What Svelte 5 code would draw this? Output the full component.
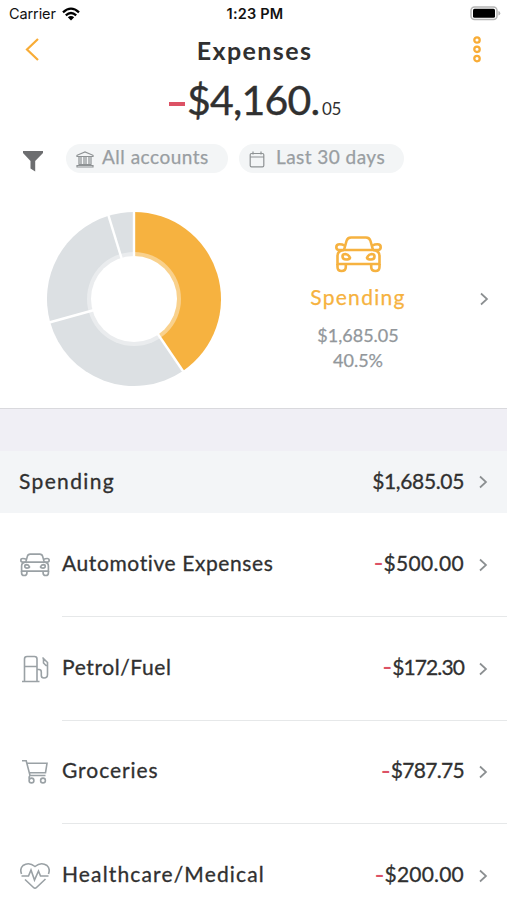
<script lang="ts">
  type IconName = "car" | "fuel" | "cart" | "heart";

  type Expense = {
    icon: IconName;
    name: string;
    amount: string;
    key: string;
  };

  const expenses: Expense[] = [
    { key: "auto", icon: "car", name: "Automotive Expenses", amount: "$500.00" },
    { key: "fuel", icon: "fuel", name: "Petrol/Fuel", amount: "$172.30" },
    { key: "groceries", icon: "cart", name: "Groceries", amount: "$787.75" },
    { key: "health", icon: "heart", name: "Healthcare/Medical", amount: "$200.00" },
  ];

  // angles in degrees, clockwise from the top
  const slices = [
    { from: 0, to: 145.8, color: "#f6b240" },
    { from: 145.8, to: 254.5, color: "#dce0e3" },
    { from: 254.5, to: 343, color: "#dce0e3" },
    { from: 343, to: 360, color: "#dce0e3" },
  ];

  function point(angle: number, radius: number): string {
    const rad = (angle * Math.PI) / 180;
    return `${88 + radius * Math.sin(rad)} ${88 - radius * Math.cos(rad)}`;
  }

  function slicePath(from: number, to: number): string {
    const large = to - from > 180 ? 1 : 0;
    return `M88 88L${point(from, 87)}A87 87 0 ${large} 1 ${point(to, 87)}Z`;
  }
</script>

{#snippet chevron()}
  <svg class="chevron" width="9" height="14" viewBox="0 0 9 14">
    <path d="M1 1.500L7 7L1 12.500" />
  </svg>
{/snippet}

{#snippet car()}
  <path d="M9 14L11.500 5Q12.500 1.500 16 1.500H31Q34.500 1.500 35.500 5L38 14" />
  <path d="M9 14H38Q44.500 14.500 44.500 20V28H2.500V20Q2.500 14.500 9 14Z" />
  <path d="M9.500 9.500Q7.500 8.300 4.500 8.300Q1.300 8.300 1.300 11.200Q1.300 14 4.500 14H9M37.500 9.500Q39.500 8.300 42.500 8.300Q45.700 8.300 45.700 11.200Q45.700 14 42.500 14H38" />
  <path d="M2.500 28V31Q2.500 35 6.500 35Q10.800 35 10.800 31V28M36.200 28V31Q36.200 35 40.500 35Q44.500 35 44.500 31V28" />
  <path d="M7.500 20.500Q7.500 18 10.500 18Q13.500 18.200 15 21.800Q14.500 23.500 11 23.500Q7.500 23.500 7.500 20.500ZM39.500 20.500Q39.500 18 36.500 18Q33.500 18.200 32 21.800Q32.500 23.500 36 23.500Q39.500 23.500 39.500 20.500Z" />
{/snippet}

<main class="screen">
  <div class="status">
    <div class="status__carrier">
      <span>Carrier</span>
      <svg width="18" height="14" viewBox="0 0 18 14">
        <path d="M1 5.300Q9 -2 17 5.300" />
        <path d="M3.800 8.300Q9 3.600 14.200 8.300" />
        <path class="status__dot" d="M5.800 10.300Q9 7.700 12.200 10.300L9 13.600Z" />
      </svg>
    </div>
    <span class="status__time">1:23 PM</span>
    <svg class="status__battery" width="31" height="15" viewBox="0 0 31 15">
      <rect x="1" y="1" width="26" height="12.500" rx="3.500" fill="#fff" stroke="#b5b5b5" stroke-width="1.500" />
      <rect x="3" y="2.800" width="22" height="9" rx="1.500" />
      <path d="M28.400 5Q30.300 5.500 30.300 7.200Q30.300 9 28.400 9.500Z" fill="#b5b5b5" />
    </svg>
  </div>

  <header class="header">
    <button type="button" class="header__button" aria-label="Back">
      <svg width="16" height="26" viewBox="0 0 16 26">
        <path d="M14 2L3 12.500L14 23" fill="none" stroke="#f8ac36" stroke-width="2.200" />
      </svg>
    </button>
    <h1>Expenses</h1>
    <button type="button" class="header__button" aria-label="More">
      <svg width="10" height="28" viewBox="0 0 10 28" fill="none" stroke="#f8ac36" stroke-width="2.300">
        <circle cx="5" cy="4" r="2.700" />
        <circle cx="5" cy="13.300" r="2.700" />
        <circle cx="5" cy="22.600" r="2.700" />
      </svg>
    </button>
  </header>

  <div class="total">
    <span class="total__minus"></span>
    <span class="total__main">$4,160.</span>
    <span class="total__cents">05</span>
  </div>

  <div class="filters">
    <svg class="filters__funnel" width="20" height="21" viewBox="0 0 20 21">
      <path d="M0 0H20V2L12.200 10V20.500L7.500 17.500V10L0 2Z" fill="#6d6e70" />
    </svg>
    <div class="chip chip--accounts">
      <svg width="18" height="17" viewBox="0 0 18 17">
        <path d="M1 5.500V4.300L9 1L17 4.300V5.500ZM2.500 13.500H15.500M1 16H17V14.500H1ZM3 6V13.500M5 6V13.500M8 6V13.500M10 6V13.500M13 6V13.500M15 6V13.500" />
      </svg>
      <span>All accounts</span>
    </div>
    <div class="chip chip--period">
      <svg width="16" height="17" viewBox="0 0 16 17">
        <path d="M2.500 2.500H13.500Q14.800 2.500 14.800 3.800V14.500Q14.800 15.800 13.500 15.800H2.500Q1.200 15.800 1.200 14.500V3.800Q1.200 2.500 2.500 2.500ZM1 6H15M4 0.500V3.500M12 0.500V3.500" />
      </svg>
      <span>Last 30 days</span>
    </div>
  </div>

  <section class="chart">
    <svg class="chart__donut" width="176" height="176" viewBox="0 0 176 176">
      {#each slices as slice}
        <path d={slicePath(slice.from, slice.to)} fill={slice.color} />
      {/each}
      <circle cx="88" cy="88" r="47" fill="#fff" fill-opacity="0.4" />
      {#each slices as slice}
        <path d={`M88 88L${point(slice.from, 88)}`} stroke="#fff" stroke-width="2.400" />
      {/each}
      <circle cx="88" cy="88" r="43" fill="#fff" />
    </svg>
    <div class="chart__summary">
      <svg class="chart__icon" width="47" height="37" viewBox="0 0 47 37">
        {@render car()}
      </svg>
      <span class="chart__name">Spending</span>
      <span class="chart__value">$1,685.05</span>
      <span class="chart__value chart__value--percent">40.5%</span>
    </div>
    {@render chevron()}
  </section>

  <div class="spacer"></div>

  <section>
    <div class="group">
      <span class="group__name">Spending</span>
      <span class="group__amount">$1,685.05</span>
      {@render chevron()}
    </div>

    {#each expenses as expense (expense.key)}
      <div class="row row--{expense.key}">
        <div class="row__icon">
          {#if expense.icon === "car"}
            <svg class="row__car" width="30" height="24" viewBox="0 0 47 37">
              {@render car()}
            </svg>
          {:else if expense.icon === "fuel"}
            <svg width="30" height="28" viewBox="0 0 30 28">
              <path d="M4.500 26V4Q4.500 1.500 7 1.500H14.500Q17 1.500 17 4V26M4.500 11.500H17M2 26.500H19.500M17 14.500H19Q21.300 14.500 21.300 17V20.500Q21.300 23 24 23Q27.500 23 27.500 19.500V7.500L22.500 2.500M23.500 3.800V8L26 10.500H27.500" />
            </svg>
          {:else if expense.icon === "cart"}
            <svg width="30" height="28" viewBox="0 0 30 28">
              <path d="M2 2.800H6.200L10 17.500H25.500M7 5.300H27L25.500 14.800H9.200M10 17.500Q8.500 19 9.500 21" />
              <circle cx="11.500" cy="22.500" r="2.400" />
              <circle cx="23" cy="22.500" r="2.400" />
            </svg>
          {:else}
            <svg width="30" height="28" viewBox="0 0 30 28">
              <path d="M1.500 12Q-0.500 6.500 3 3.500Q9 -0.500 15 4.500Q21 -0.500 27 3.500Q30.500 6.500 28.500 12M1.500 14H8.500L11 8L14.500 18L18.500 9L20.500 14H28.500M5 17.500L13.500 25.500Q15 27 16.500 25.500L25.500 17" />
            </svg>
          {/if}
        </div>
        <div class="row__body">
          <span class="row__name">{expense.name}</span>
          <span class="row__minus">-</span>
          <span class="row__amount">{expense.amount}</span>
          {@render chevron()}
        </div>
      </div>
    {/each}
  </section>
</main>

<style>
  :global(body) {
    margin: 0;
    background: #fff;
  }

  .screen {
    height: 900px;
    overflow: hidden;
    box-sizing: border-box;
    background: #fff;
    color: #303030;
    font-family: Lato, "Open Sans", sans-serif;
  }

  svg {
    display: block;
    flex: none;
  }

  span {
    white-space: nowrap;
  }

  .status {
    height: 27px;
    padding: 0 6px 0 9px;
    display: grid;
    grid-template-columns: 1fr auto 1fr;
    align-items: center;
    color: #111;
    font: 14.5px/27px Inter, sans-serif;
  }

  .status__carrier {
    display: flex;
    align-items: center;
    gap: 6px;
    letter-spacing: -0.1px;
  }

  .status__carrier svg {
    fill: none;
    stroke: #000;
    stroke-width: 2.3;
  }

  .status__carrier .status__dot {
    fill: #000;
    stroke: none;
  }

  .status__time {
    font-weight: 600;
    letter-spacing: 0.2px;
  }

  .status__battery {
    justify-self: end;
  }

  .header {
    height: 46px;
    padding: 0 22px 0 24px;
    display: flex;
    align-items: center;
    justify-content: space-between;
  }

  .header__button {
    width: 16px;
    padding: 0;
    border: none;
    background: none;
    display: flex;
    justify-content: center;
  }

  h1 {
    margin: 0;
    font-size: 25px;
    line-height: 46px;
    font-weight: 700;
    letter-spacing: 1.4px;
  }

  .total {
    height: 54px;
    padding-left: 169px;
    display: flex;
    align-items: baseline;
    line-height: 54px;
  }

  .total__minus {
    width: 16px;
    height: 4px;
    margin-right: 2px;
    background: #dc5265;
    transform: translateY(-9px);
  }

  .total__main {
    width: 135px;
    font-size: 41px;
    letter-spacing: -0.8px;
    -webkit-text-stroke: 0.4px #303030;
  }

  .total__cents {
    font-size: 17px;
    letter-spacing: -0.3px;
  }

  .filters {
    height: 46px;
    padding: 17px 0 0 23px;
    box-sizing: border-box;
    display: flex;
    align-items: flex-start;
  }

  .filters__funnel {
    margin: 7px 23px 0 0;
  }

  .chip {
    height: 29px;
    padding-left: 10px;
    box-sizing: border-box;
    border-radius: 15px;
    background: #f3f5f6;
    color: #999ea2;
    display: flex;
    align-items: center;
    font-size: 19px;
    line-height: 26px;
    -webkit-text-stroke: 0.25px #999ea2;
  }

  .chip svg {
    margin-top: 1px;
    fill: none;
    stroke: #8e9294;
    stroke-width: 1.2;
  }

  .chip span {
    margin-top: -3px;
  }

  .chip--accounts {
    width: 162px;
    margin-right: 11px;
    gap: 8px;
    letter-spacing: 0.5px;
  }

  .chip--period {
    width: 165px;
    gap: 11px;
    letter-spacing: 0.45px;
  }

  .chart {
    height: 236px;
    padding: 38px 18px 0 46px;
    box-sizing: border-box;
    display: flex;
    align-items: flex-start;
    border-bottom: 1px solid #d9d9dd;
  }

  .chart__summary {
    width: 190px;
    margin-left: 41px;
    padding-top: 25px;
    display: flex;
    flex-direction: column;
    align-items: center;
  }

  .chart__icon {
    fill: none;
    stroke: #f6b240;
    stroke-width: 2.6;
  }

  .chart__name {
    margin-top: 9px;
    color: #f6b240;
    font-size: 21px;
    line-height: 30px;
    letter-spacing: 1.3px;
    -webkit-text-stroke: 0.25px #f6b240;
  }

  .chart__value {
    margin-top: 11px;
    color: #92979b;
    font-size: 18px;
    line-height: 25px;
    -webkit-text-stroke: 0.25px #92979b;
  }

  .chart__value--percent {
    margin-top: 0;
  }

  .chart > .chevron {
    margin: 81px 0 0 auto;
  }

  .chevron {
    fill: none;
    stroke: #8b8f91;
    stroke-width: 1.7;
  }

  .spacer {
    height: 42px;
    background: #f0eff5;
  }

  .group {
    height: 62px;
    padding: 0 19px 0 19px;
    display: flex;
    align-items: center;
    background: #f3f5f7;
    font-size: 21px;
    -webkit-text-stroke: 0.3px #303030;
  }

  .group__name {
    margin-top: -4px;
    flex: 1;
    letter-spacing: 1.35px;
  }

  .group__amount {
    margin-top: -4px;
    letter-spacing: -0.35px;
  }

  .group .chevron,
  .row .chevron {
    margin-left: 15px;
  }

  .row {
    height: 103.8px;
    display: flex;
  }

  .row__icon {
    width: 62px;
    padding-left: 20px;
    box-sizing: border-box;
    display: flex;
    align-items: center;
  }

  .row__icon svg {
    fill: none;
    stroke: #9aa1a5;
    stroke-width: 1.6;
  }

  .row__icon .row__car {
    stroke-width: 2.6;
  }

  .row__body {
    flex: 1;
    padding-right: 19px;
    display: flex;
    align-items: center;
    border-bottom: 1.5px solid #e6e8e9;
    font-size: 21px;
  }

  .row__name,
  .row__amount {
    margin-top: -4px;
    -webkit-text-stroke: 0.3px #303030;
  }

  .row__name {
    flex: 1;
    letter-spacing: 0.6px;
  }

  .row__minus {
    margin-top: -4px;
    color: #dc5265;
    font-size: 27px;
    line-height: 20px;
  }

  .row--auto .row__amount {
    letter-spacing: 0.35px;
  }

  .row--fuel .row__amount {
    letter-spacing: -0.9px;
  }

  .row--groceries .row__name {
    letter-spacing: 0.95px;
  }

  .row--groceries .row__amount {
    letter-spacing: -0.7px;
  }

  .row--health .row__name {
    letter-spacing: 1.15px;
  }

  .row--health .row__amount {
    letter-spacing: 0.2px;
  }

  .row .chevron {
    margin-top: 1px;
  }
</style>
